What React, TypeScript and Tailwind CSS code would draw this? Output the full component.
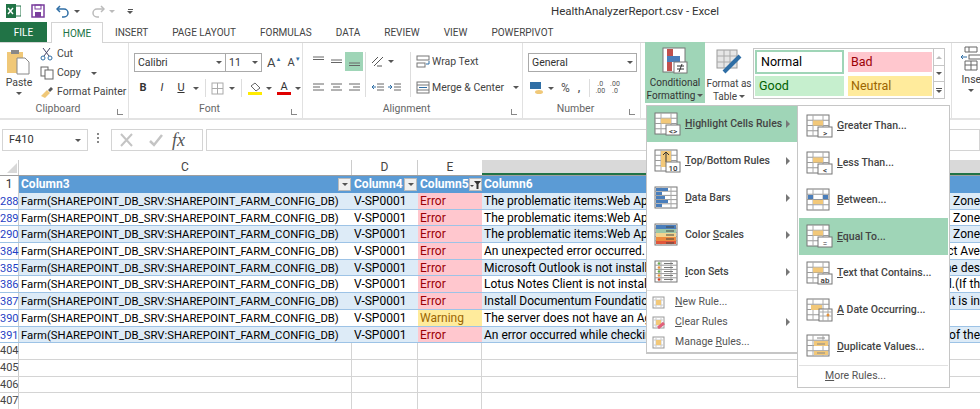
import type { ReactNode } from "react";

const ui = "font-['Roboto',sans-serif]";

const Caret = ({ className = "" }: { className?: string }) => (
  <span className={`inline-block w-0 h-0 border-x-[3px] border-x-transparent border-t-[3px] border-t-[#555] ${className}`} />
);

const Arrow = () => (
  <span className="w-0 h-0 border-y-[4px] border-y-transparent border-l-[4px] border-l-[#777] shrink-0" />
);

const Group = ({ label, width, children }: { label: string; width: string; children: ReactNode }) => (
  <div className={`${width} h-full border-r border-[#e1e1e1] flex flex-col shrink-0 relative`}>
    <div className="flex-1 min-h-0">{children}</div>
    <div className="h-[16px] pr-[12px] text-center text-[10.5px] leading-[14px] text-[#666]">{label}</div>
    <span className="absolute right-[5px] bottom-[3px] w-[6px] h-[6px] border-l border-b border-[#888]" />
  </div>
);

// underlines the access key of a menu label
const Key = ({ label, at }: { label: string; at: number }) => (
  <span className="whitespace-nowrap">
    {label.slice(0, at)}
    <span className="underline">{label[at]}</span>
    {label.slice(at + 1)}
  </span>
);

const Sheet = ({ cols = 3, rows = 4 }: { cols?: number; rows?: number }) => (
  <>
    <rect x="1" y="1" width="22" height="21" fill="#fff" stroke="#777" />
    {Array.from({ length: rows - 1 }, (_, i) => (
      <path key={i} d={`M1 ${1 + ((i + 1) * 21) / rows}H23`} stroke="#999" />
    ))}
    {cols === 3 && <path d="M7 1V22M17 1V22" stroke="#aaa" />}
  </>
);

const Overlay = ({ text, w = 14 }: { text: string; w?: number }) => (
  <>
    <rect x={26 - w} y="13" width={w} height="10" fill="#fff" stroke="#777" />
    <text x={26 - w / 2} y="21.5" textAnchor="middle" fontSize="8" fontFamily="Roboto" fill="#333">{text}</text>
  </>
);

const RuleIcon = ({ kind }: { kind: string }) => (
  <svg width="27" height="24" viewBox="0 0 27 24" fill="none" className="shrink-0">
    <Sheet rows={kind === "scale" || kind === "bars" || kind === "icons" ? 5 : 4} />
    {kind === "hl" && <><rect x="7" y="6.5" width="10" height="5" fill="#f2c879" /><Overlay text="<>" /></>}
    {kind === "gt" && <><rect x="7" y="6.5" width="10" height="5" fill="#f2c879" /><Overlay text=">" /></>}
    {kind === "lt" && <><rect x="7" y="6.5" width="10" height="5" fill="#f2c879" /><Overlay text="<" /></>}
    {kind === "eq" && <><rect x="7" y="6.5" width="10" height="5" fill="#f2c879" /><Overlay text="=" /></>}
    {kind === "ab" && <><rect x="7" y="6.5" width="10" height="5" fill="#f2c879" /><Overlay text="ab" /></>}
    {kind === "top" && (
      <>
        <rect x="7" y="2" width="10" height="16" fill="#f2c879" />
        <path d="M12 13V3M9 6l3-3 3 3" stroke="#333" />
        <Overlay text="10" />
      </>
    )}
    {kind === "bars" && (
      <g fill="#4a7ebb">
        <rect x="2" y="2" width="12" height="3" /><rect x="2" y="6" width="6" height="3" /><rect x="2" y="10" width="9" height="3" />
        <rect x="2" y="14" width="12" height="3" /><rect x="2" y="18" width="6" height="3" />
      </g>
    )}
    {kind === "scale" && (
      <g>
        <rect x="2" y="2" width="20" height="4" fill="#4a7ebb" /><rect x="2" y="6" width="20" height="4" fill="#9cc7a8" />
        <rect x="2" y="10" width="20" height="4" fill="#f2d48f" /><rect x="2" y="14" width="20" height="4" fill="#ed8a3f" />
        <rect x="2" y="18" width="20" height="3" fill="#e0563b" />
        <path d="M12 4h8M12 8h8M12 12h8M12 16h8M12 20h8" stroke="#444" />
      </g>
    )}
    {kind === "icons" && (
      <g>
        <circle cx="5" cy="3.5" r="1.3" fill="#6aa84f" /><circle cx="5" cy="7.5" r="1.3" fill="#e69138" /><circle cx="5" cy="11.5" r="1.3" fill="#6aa84f" />
        <circle cx="5" cy="15.5" r="1.3" fill="#e69138" /><circle cx="5" cy="19.5" r="1.3" fill="#cc4125" />
        <path d="M10 3.5h9M10 7.5h9M10 11.5h9M10 15.5h9M10 19.5h9" stroke="#777" />
      </g>
    )}
    {kind === "between" && (
      <>
        <rect x="2" y="7" width="5" height="4" fill="#4a7ebb" /><rect x="17" y="7" width="5" height="4" fill="#4a7ebb" />
        <rect x="7" y="12" width="10" height="4" fill="#f2c879" />
      </>
    )}
    {kind === "date" && (
      <>
        <rect x="5" y="7" width="11" height="5" fill="#f2c879" />
        <rect x="13" y="11" width="13" height="12" fill="#fff" stroke="#777" />
        <path d="M13 14H26M13 18H26M17 11V23M22 11V23" stroke="#aaa" />
        <circle cx="22" cy="17" r="1.5" fill="#e69138" />
      </>
    )}
    {kind === "dup" && (
      <g fill="#f2c879">
        <rect x="8" y="7" width="14" height="5" /><rect x="8" y="17" width="14" height="4" />
        <path d="M11 4h8M11 10h8M11 19h8" stroke="#888" />
      </g>
    )}
  </svg>
);

const SmallIcon = ({ kind }: { kind: number }) => (
  <svg width="13" height="13" viewBox="0 0 13 13" className="shrink-0">
    <rect x="1" y="1" width="11" height="11" fill="#fff" stroke="#999" />
    <path d="M1 4H12M1 9H12M4 1V12M9 1V12" stroke="#ccc" />
    <rect x="4" y="4" width="5" height="5" fill="#f2c879" />
    {kind === 1 && <path d="M6 12L12 7" stroke="#e0607a" strokeWidth="3" />}
  </svg>
);

const leftRules: [string, string, number][] = [
  ["Highlight Cells Rules", "hl", 0],
  ["Top/Bottom Rules", "top", 0],
  ["Data Bars", "bars", 0],
  ["Color Scales", "scale", 6],
  ["Icon Sets", "icons", 0],
];
const rightRules: [string, string, number][] = [
  ["Greater Than...", "gt", 0],
  ["Less Than...", "lt", 0],
  ["Between...", "between", 0],
  ["Equal To...", "eq", 0],
  ["Text that Contains...", "ab", 0],
  ["A Date Occurring...", "date", 0],
  ["Duplicate Values...", "dup", 0],
];
const smallRules: [string, number][] = [
  ["New Rule...", 0],
  ["Clear Rules", 0],
  ["Manage Rules...", 7],
];

const rows = [
  ["288", "Error", "The problematic items:Web Ap", "; Zone"],
  ["289", "Error", "The problematic items:Web Ap", "; Zone"],
  ["290", "Error", "The problematic items:Web Ap", "; Zone"],
  ["384", "Error", "An unexpected error occurred.", "act Ave"],
  ["385", "Error", "Microsoft Outlook is not install", "ne des"],
  ["386", "Error", "Lotus Notes Client is not install", "d.(If th"],
  ["387", "Error", "Install Documentum Foundation", "nt is in"],
  ["390", "Warning", "The server does not have an Ag", ""],
  ["391", "Error", "An error occurred while checkin", "' of the"],
];

const FilterBtn = ({ active }: { active?: boolean }) => (
  <span className="w-[13px] h-[13px] bg-[#f0f0f0] border border-[#bbb] flex items-center justify-center shrink-0">
    {active ? (
      <svg width="11" height="9" viewBox="0 0 11 9"><path d="M0 5h4L2 7z" fill="#444" /><path d="M4 1h7L8.5 4v5h-2V4z" fill="#333" /></svg>
    ) : (
      <Caret />
    )}
  </span>
);

const HeadCell = ({ w, label, children }: { w: string; label: string; children?: ReactNode }) => (
  <div className={`${w} flex items-center justify-between pl-[2px] pr-[1px] text-white font-bold bg-[#5b9bd5] shrink-0`}>
    <span>{label}</span>
    {children}
  </div>
);

const AlignIcon = ({ d, on }: { d: string; on?: boolean }) => (
  <span className={`h-[19px] flex items-center justify-center ${on ? "bg-[#9fd5b7]" : ""}`}>
    <svg width="13" height="13" viewBox="0 0 13 13" fill="none" stroke="#666"><path d={d} /></svg>
  </span>
);

export default function App() {
  return (
    <div className={`relative w-[980px] h-[409px] overflow-hidden bg-white text-[#444] ${ui}`}>
      {/* quick access + title */}
      <div className="h-[22px] flex items-center pl-[6px] relative">
        <svg width="15" height="14" viewBox="0 0 15 14"><rect width="10" height="14" x="0" fill="#217346" /><rect x="9" y="2" width="6" height="10" fill="none" stroke="#217346" /><path d="M2 4l5 6M7 4l-5 6" stroke="#fff" strokeWidth="1.4" /></svg>
        <svg className="ml-[10px]" width="14" height="14" viewBox="0 0 14 14" fill="none"><rect x="1" y="1" width="12" height="12" stroke="#7a3e9d" strokeWidth="1.5" /><rect x="4" y="1" width="6" height="4" stroke="#7a3e9d" /><rect x="4" y="8" width="6" height="5" fill="#7a3e9d" /></svg>
        <svg className="ml-[11px]" width="14" height="14" viewBox="0 0 14 14" fill="none"><path d="M4 2L1 5l3 3" stroke="#2f6ea5" strokeWidth="1.5" /><path d="M1 5h7a4 4 0 010 8H6" stroke="#2f6ea5" strokeWidth="1.5" /></svg>
        <Caret className="ml-[4px]" />
        <svg className="ml-[11px]" width="14" height="14" viewBox="0 0 14 14" fill="none"><path d="M10 2l3 3-3 3" stroke="#bbb" strokeWidth="1.5" /><path d="M13 5H6a4 4 0 000 8h2" stroke="#bbb" strokeWidth="1.5" /></svg>
        <Caret className="ml-[4px] opacity-40" />
        <span className="ml-[12px] flex flex-col items-center gap-[1px]"><span className="w-[5px] h-px bg-[#555]" /><Caret /></span>
        <span className="absolute left-[551px] top-[3px] text-[11.5px] leading-[16px] text-[#333]">HealthAnalyzerReport.csv - Excel</span>
      </div>
      {/* tabs */}
      <div className="h-[21px] flex items-stretch text-[10px] border-b border-[#d4d4d4]">
        <div className="w-[47px] bg-[#217346] text-white flex items-center justify-center">FILE</div>
        <div className="ml-[4px] w-[52px] -mb-px bg-white border border-b-0 border-[#d4d4d4] text-[#217346] flex items-center justify-center">HOME</div>
        <div className="ml-[12px] flex h-full items-center gap-[24px]">
          <span>INSERT</span><span>PAGE LAYOUT</span><span>FORMULAS</span><span>DATA</span><span>REVIEW</span><span>VIEW</span><span>POWERPIVOT</span>
        </div>
      </div>
      {/* ribbon */}
      <div className="h-[77px] flex border-b-2 border-[#e3e3e3] text-[10.5px] whitespace-nowrap">
        <Group label="Clipboard" width="w-[129px]">
          <div className="flex h-full">
            <div className="w-[38px] flex flex-col items-center pt-[6px]">
              <svg width="26" height="26" viewBox="0 0 26 26"><rect x="1" y="3" width="16" height="21" fill="#f0c878" /><rect x="5" y="1" width="8" height="4" fill="#888" /><path d="M11 9h8l4 4v12H11z" fill="#fff" stroke="#888" /></svg>
              <span className="leading-[14px] mt-[1px]">Paste</span>
              <Caret className="mt-[2px]" />
            </div>
            <div className="flex flex-col pt-[3px] gap-[3px] ml-[2px]">
              <div className="h-[16px] flex items-center gap-[3px]"><svg width="14" height="14" viewBox="0 0 14 14" fill="none" stroke="#446"><path d="M3 1l6 8M10 1L4 9" /><circle cx="3" cy="11" r="2" stroke="#2f6ea5" /><circle cx="10" cy="11" r="2" stroke="#2f6ea5" /></svg>Cut</div>
              <div className="h-[16px] flex items-center gap-[3px]"><svg width="14" height="14" viewBox="0 0 14 14" fill="#fff" stroke="#666"><rect x="1" y="1" width="7" height="9" /><rect x="5" y="4" width="8" height="9" /></svg>Copy<Caret className="ml-[7px]" /></div>
              <div className="h-[16px] flex items-center gap-[3px]"><svg width="14" height="14" viewBox="0 0 14 14"><path d="M1 11l6-6 3 3-5 5z" fill="#f0c878" /><path d="M8 5l3-3 2 2-3 3z" fill="#555" /></svg>Format Painter</div>
            </div>
          </div>
        </Group>
        <Group label="Font" width="w-[174px]">
          <div className="pl-[5px] pt-[10px]">
            <div className="flex items-center h-[19px]">
              <div className="w-[92px] h-full border border-[#aaa] flex items-center justify-between px-[3px] text-[#333]">Calibri<Caret /></div>
              <div className="w-[36px] h-full border border-l-0 border-[#aaa] flex items-center justify-between px-[3px] text-[#333]">11<Caret /></div>
              <span className="ml-[5px] text-[13px] leading-none">A</span><span className="text-[6px] text-[#2f6ea5] -mt-2">▲</span>
              <span className="ml-[6px] text-[11px] leading-none">A</span><span className="text-[6px] text-[#2f6ea5] -mt-2">▼</span>
            </div>
            <div className="flex items-center h-[18px] mt-[7px] text-[11px] text-[#333]">
              <span className="w-[14px] ml-[2px] font-bold text-center">B</span>
              <span className="w-[14px] ml-[5px] italic text-center">I</span>
              <span className="w-[14px] ml-[5px] underline text-center">U</span>
              <Caret className="ml-[5px]" />
              <span className="ml-[6px] w-px h-[18px] bg-[#ddd]" />
              <svg className="ml-[5px]" width="13" height="13" viewBox="0 0 13 13" fill="none" stroke="#aaa"><rect x="1" y="1" width="11" height="11" /><path d="M6.5 1V12M1 6.5H12" /></svg>
              <Caret className="ml-[5px]" />
              <span className="ml-[6px] w-px h-[18px] bg-[#ddd]" />
              <span className="ml-[6px] w-[14px] h-[14px] border-b-[3px] border-[#ffeb00] flex items-center justify-center"><svg width="11" height="10" viewBox="0 0 11 10" fill="#fff" stroke="#666"><path d="M5 1l5 5-4 3-5-5z" /></svg></span>
              <Caret className="ml-[4px]" />
              <span className="ml-[5px] w-[14px] h-[14px] border-b-[3px] border-[#e00000] text-center text-[11px] leading-[11px]">A</span>
              <Caret className="ml-[4px]" />
            </div>
          </div>
        </Group>
        <Group label="Alignment" width="w-[220px]">
          <div className="flex pt-[9px] pl-[6px]">
            <div className="grid grid-cols-3 gap-y-[7px] w-[54px]">
              <AlignIcon d="M1 2H12M1 4.5H12" />
              <AlignIcon d="M1 5H12M1 7.5H12" />
              <AlignIcon d="M1 8H12M1 10.5H12" on />
              <AlignIcon d="M1 3H12M1 6H8M1 9H12" />
              <AlignIcon d="M1 3H12M3 6H10M1 9H12" />
              <AlignIcon d="M1 3H12M5 6H12M1 9H12" />
            </div>
            <div className="ml-[2px] w-[45px] border-l border-[#ddd] flex flex-col gap-[7px] pl-[5px] text-[#555]">
              <span className="h-[19px] flex items-center">
                <svg width="15" height="13" viewBox="0 0 15 13" fill="none" stroke="#555"><path d="M1 8l6-6M3 11l9-9M11 11H6" /></svg>
                <Caret className="ml-[2px]" />
              </span>
              <span className="h-[19px] flex items-center gap-[3px]">
                <svg width="14" height="13" viewBox="0 0 14 13" fill="none" stroke="#666"><path d="M6 3H13M6 6H13M6 9H13" /><path d="M5 6H1M3 4L1 6l2 2" stroke="#2f6ea5" /></svg>
                <svg width="14" height="13" viewBox="0 0 14 13" fill="none" stroke="#666"><path d="M6 3H13M6 6H13M6 9H13" /><path d="M0 6H4M2 4l2 2-2 2" stroke="#2f6ea5" /></svg>
              </span>
            </div>
            <div className="border-l border-[#ddd] pl-[5px] flex flex-col gap-[7px]">
              <span className="h-[19px] flex items-center gap-[2px]"><svg width="14" height="13" viewBox="0 0 14 13" fill="none" stroke="#777"><rect x="1" y="1" width="12" height="4" /><rect x="1" y="8" width="8" height="4" /><path d="M13 6v3H10" stroke="#2f6ea5" /></svg>Wrap Text</span>
              <span className="h-[19px] flex items-center gap-[2px]"><svg width="14" height="13" viewBox="0 0 14 13" fill="none" stroke="#777"><rect x="1" y="1" width="12" height="11" /><path d="M1 4H13M1 9H13" /><path d="M3 6.5H11" stroke="#2f6ea5" /></svg>Merge &amp; Center<Caret className="ml-[7px]" /></span>
            </div>
          </div>
        </Group>
        <Group label="Number" width="w-[118px]">
          <div className="pl-[5px] pt-[10px]">
            <div className="w-[109px] h-[19px] border border-[#aaa] flex items-center justify-between px-[3px] text-[#333]">General<Caret /></div>
            <div className="flex items-center h-[18px] mt-[7px] text-[#555]">
              <svg className="ml-[2px]" width="14" height="14" viewBox="0 0 14 14"><rect x="0" y="1" width="11" height="7" fill="#2f6ea5" /><ellipse cx="9" cy="11" rx="4" ry="2" fill="#f0c878" /></svg>
              <Caret className="ml-[4px]" />
              <span className="ml-[7px] text-[12px]">%</span>
              <span className="ml-[8px] font-bold">,</span>
              <span className="ml-[9px] w-px h-[18px] bg-[#ddd]" />
              <span className="ml-[5px] text-[7px] leading-[7px] text-center">.0<br />.00</span>
              <span className="ml-[5px] text-[7px] leading-[7px] text-center">.00<br />.0</span>
            </div>
          </div>
        </Group>
        <div className="w-[311px] h-full border-r border-[#e1e1e1] flex shrink-0">
          <div className="w-[60px] h-[61px] bg-[#9fd5b7] flex flex-col items-center ml-[4px] -mt-px pt-[5px] text-[10px] leading-[13px] text-[#333]">
            <svg width="26" height="28" viewBox="0 0 26 28" className="shrink-0"><rect x="1" y="1" width="22" height="24" fill="#fff" stroke="#777" /><rect x="5" y="2" width="6" height="7" fill="#c0504d" /><rect x="5" y="9" width="13" height="6" fill="#4a7ebb" /><rect x="5" y="15" width="5" height="9" fill="#c0504d" /><rect x="12" y="15" width="13" height="11" fill="#fff" stroke="#777" /><path d="M15 19h7M15 22h7M20 17l-3 8" stroke="#333" /></svg>
            <span className="mt-[1px]">Conditional</span>
            <span className="flex items-center gap-[2px]">Formatting<Caret /></span>
          </div>
          <div className="w-[48px] flex flex-col items-center pt-[5px] text-[10px] leading-[13px]">
            <svg width="28" height="28" viewBox="0 0 28 28" className="shrink-0"><rect x="2" y="2" width="20" height="18" fill="#e6e6e6" stroke="#999" /><path d="M2 8H22M2 14H22M9 2V20M15 2V20" stroke="#aaa" /><path d="M9 24l16-16" stroke="#2f6ea5" strokeWidth="4" /></svg>
            <span className="mt-[1px]">Format as</span>
            <span className="flex items-center gap-[2px]">Table<Caret /></span>
          </div>
          <div className="mt-[5px] w-[192px] h-[51px] border border-[#c6c6c6] flex text-[12.5px] text-[#333]">
            <div className="grid grid-cols-[89px_84px] grid-rows-2 gap-x-[4px] flex-1 p-[1px] pb-0">
              <span className="border-[2px] border-[#9fd5b7] bg-white flex items-center pl-[4px] text-black">Normal</span>
              <span className="bg-[#ffc7ce] text-[#9c0006] flex items-center pl-[3px] my-[2px]">Bad</span>
              <span className="bg-[#c6efce] text-[#006100] flex items-center pl-[4px] my-[2px]">Good</span>
              <span className="bg-[#ffeb9c] text-[#9c6500] flex items-center pl-[3px] my-[2px]">Neutral</span>
            </div>
            <div className="w-[12px] border-l border-[#c6c6c6] flex flex-col items-center justify-between">
              <span className="h-[16px] flex items-center"><Caret className="rotate-180 opacity-40" /></span>
              <span className="h-[17px] w-full border-y border-[#c6c6c6] flex items-center justify-center"><Caret /></span>
              <span className="h-[16px] flex flex-col items-center justify-center gap-[1px]"><span className="w-[6px] h-px bg-[#555]" /><Caret /></span>
            </div>
          </div>
        </div>
        <div className="flex flex-col items-center pl-[8px] pt-[1px] text-[10.5px] leading-[13px]">
          <svg width="22" height="28" viewBox="0 0 22 28" fill="none" stroke="#666"><path d="M5 3H17V8H5zM9 3V8M5 17H17V26H5zM11 17V26M5 21H17" /><path d="M1 13H7M3 11l-2 2 2 2" stroke="#2f6ea5" /><rect x="9" y="11" width="12" height="4" /></svg>
          <span className="mt-[1px] w-[19px]">Inse</span>
          <Caret className="mt-[3px]" />
        </div>
      </div>
      {/* formula bar */}
      <div className="h-[31px] pt-[9px] flex items-start text-[11px]">
        <div className="ml-[2px] w-[86px] h-[22px] border border-[#d4d4d4] flex items-center justify-between px-[6px] text-[#333]">F410<Caret /></div>
        <span className="ml-[9px] mt-[4px] flex flex-col gap-[2px]"><span className="w-[2px] h-[2px] bg-[#888]" /><span className="w-[2px] h-[2px] bg-[#888]" /><span className="w-[2px] h-[2px] bg-[#888]" /></span>
        <div className="ml-[12px] w-[92px] h-[22px] border border-[#d4d4d4] flex items-center pl-[7px]">
          <svg width="16" height="14" viewBox="0 0 16 14" fill="none" stroke="#c4c4c4" strokeWidth="2"><path d="M2 1l11 12M13 1L2 13" /></svg>
          <svg className="ml-[13px]" width="16" height="14" viewBox="0 0 16 14" fill="none" stroke="#c4c4c4" strokeWidth="2.5"><path d="M2 8l4 4 8-10" /></svg>
          <span className="ml-[8px] font-['Liberation_Serif',serif] italic text-[18px] leading-none text-[#555]">fx</span>
        </div>
        <div className="ml-[3px] flex-1 h-[22px] border border-[#d4d4d4]" />
      </div>
      {/* sheet */}
      <div className="text-[12px] text-black mt-[9px]">
        <div className="flex h-[16px] text-[12px] leading-[15px] text-[#444] bg-[#f0f0f0] border-b border-[#9f9f9f]">
          <div className="w-[19px] shrink-0 bg-white border-r border-[#ccc] relative"><span className="absolute right-[1px] bottom-[2px] w-0 h-0 border-l-[10px] border-l-transparent border-b-[10px] border-b-[#d8d8d8]" /></div>
          <div className="w-[333px] bg-white border-r border-[#ccc] text-center shrink-0">C</div>
          <div className="w-[66px] bg-white border-r border-[#ccc] text-center shrink-0">D</div>
          <div className="w-[64px] bg-white text-center shrink-0">E</div>
          <div className="flex-1 bg-[#d9d9d9] border-b-2 border-[#217346]" />
        </div>
        <div className="flex h-[17px] leading-[17px]">
          <div className="w-[19px] text-center text-[#333] bg-white border-r border-[#ccc] shrink-0">1</div>
          <HeadCell w="w-[333px]" label="Column3"><FilterBtn /></HeadCell>
          <HeadCell w="w-[66px]" label="Column4"><FilterBtn /></HeadCell>
          <HeadCell w="w-[64px]" label="Column5"><FilterBtn active /></HeadCell>
          <div className="flex-1 pl-[2px] text-white font-bold bg-[#5b9bd5]">Column6</div>
        </div>
        {rows.map(([n, status, text, tail], i) => (
          <div key={n} className={`flex h-[16.7px] leading-[17px] border-b border-[#9dc3e6] ${i % 2 === 0 ? "bg-[#ddebf7]" : "bg-white"}`}>
            <div className="w-[19px] bg-white text-[#1f3fc4] border-r border-[#ccc] text-center text-[11px] shrink-0">{n}</div>
            <div className="w-[333px] pl-[2px] shrink-0 whitespace-nowrap text-[11.3px]">Farm(SHAREPOINT_DB_SRV:SHAREPOINT_FARM_CONFIG_DB)</div>
            <div className="w-[66px] pl-[2px] shrink-0">V-SP0001</div>
            <div className={`w-[64px] pl-[2px] shrink-0 ${status === "Error" ? "bg-[#ffc7ce] text-[#9c0006]" : "bg-[#ffeb9c] text-[#9c6500]"}`}>{status}</div>
            <div className="flex-1 pl-[2px] flex justify-between overflow-hidden whitespace-nowrap"><span>{text}</span><span>{tail}</span></div>
          </div>
        ))}
        {["404", "405", "406", "407"].map((n) => (
          <div key={n} className="flex h-[16.7px] leading-[16px] border-b border-[#d4d4d4]">
            <div className="w-[19px] border-r border-[#ccc] text-center text-[11px] text-[#444] shrink-0">{n}</div>
            <div className="w-[333px] border-r border-[#d4d4d4] shrink-0" />
            <div className="w-[66px] border-r border-[#d4d4d4] shrink-0" />
            <div className="w-[64px] border-r border-[#d4d4d4] shrink-0" />
            <div className="flex-1" />
          </div>
        ))}
      </div>
      {/* conditional formatting menu */}
      <div className="absolute left-[646px] top-[105px] w-[152px] h-[249px] bg-white border border-[#c6c6c6] border-b-2 text-[10.5px] font-medium text-[#444]">
        {leftRules.map(([label, kind, at], i) => (
          <div key={label} className={`${i === 0 ? "h-[36px] bg-[#9fd5b7]" : "h-[37px]"} flex items-center px-[7px]`}>
            <RuleIcon kind={kind} />
            <span className="ml-[4px] flex-1"><Key label={label} at={at} /></span>
            <Arrow />
          </div>
        ))}
        <div className="h-px bg-[#e1e1e1]" />
        <div className="pt-[1px] font-normal text-[#555]">
          {smallRules.map(([l, at], i) => (
            <div key={l} className="h-[20px] flex items-center pl-[5px] pr-[7px]">
              <SmallIcon kind={i} />
              <span className="ml-[10px] flex-1"><Key label={l} at={at} /></span>
              {i === 1 && <Arrow />}
            </div>
          ))}
        </div>
      </div>
      <div className="absolute left-[797px] top-[105px] w-[153px] h-[283px] pt-[2px] bg-white border border-[#c6c6c6] text-[10.5px] text-[#444] font-medium">
        {rightRules.map(([label, kind, at]) => (
          <div key={label} className={`h-[36.7px] mx-[1px] flex items-center pl-[7px] ${kind === "eq" ? "bg-[#9fd5b7]" : ""}`}>
            <RuleIcon kind={kind} />
            <span className="ml-[4px]"><Key label={label} at={at} /></span>
          </div>
        ))}
        <div className="h-px bg-[#e1e1e1] mx-[1px]" />
        <div className="h-[21px] flex items-center pl-[27px] font-normal text-[#555]"><Key label="More Rules..." at={0} /></div>
      </div>
    </div>
  );
}
